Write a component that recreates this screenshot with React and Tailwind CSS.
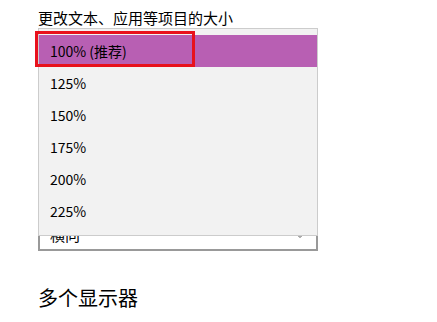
import React from "react";

const SCALES = ["100% (推荐)", "125%", "150%", "175%", "200%", "225%"];

const App = () => {
  return (
    <div className="relative w-[437px] h-[322px] bg-white pl-[38px] text-black font-['Noto_Sans_CJK_SC',sans-serif] overflow-hidden">
      <div className="pt-[8px] text-[15px] leading-[20px]">更改文本、应用等项目的大小</div>

      {/* orientation select, mostly covered by the open menu */}
      <div className="mt-[191px] w-[280px] h-[32px] border-2 border-[#999] bg-white flex items-center justify-between pl-[10px] pr-[10px] text-[15px]">
        <span>横向</span>
        <svg width="12" height="12" viewBox="0 0 12 12" fill="none" stroke="#555" strokeWidth="1">
          <path d="M2 4.5 L6 8.5 L10 4.5" />
        </svg>
      </div>

      <div className="mt-[34px] text-[20px] leading-[26px]">多个显示器</div>

      {/* open dropdown menu */}
      <div className="absolute left-[38px] top-[28px] w-[280px] h-[208px] bg-[#f2f2f2] border border-[#ccc] pt-[6px]">
        {SCALES.map((s, i) => (
          <div
            key={s}
            className={
              i === 0
                ? "h-[32px] flex items-center pl-[11px] text-[14px] bg-[#b85fb3]"
                : "h-[32px] flex items-center pl-[11px] text-[14px]"
            }
          >
            {s}
          </div>
        ))}
      </div>

      {/* highlight marker */}
      <div className="absolute left-[35px] top-[31px] w-[160px] h-[36px] border-[3px] border-[#e8111c]" />
    </div>
  );
};

export default App;
